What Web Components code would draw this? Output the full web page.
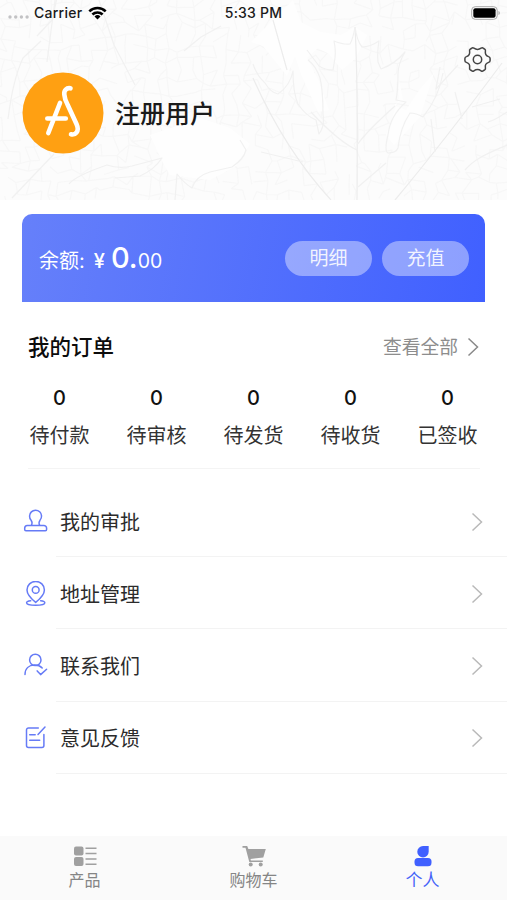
<!DOCTYPE html>
<html lang="zh-CN">
<head>
<meta charset="utf-8">
<title>个人</title>
<style>
    body {
        margin: 0;
        background: #fff;
        font-family: Inter, "Noto Sans CJK SC", sans-serif;
    }
</style>
</head>
<body>
<x-profile-page></x-profile-page>

<script>
function makeTemplate(html) {
    const template = document.createElement('template');
    template.innerHTML = html;
    return template;
}

class BaseElement extends HTMLElement {
    constructor() {
        super();
        this.attachShadow({mode: 'open'});
        this.shadowRoot.appendChild(this.constructor.template.content.cloneNode(true));
    }
}

const icons = {
    stamp: `<path d="M8.300 16.500c1.200-2.300.9-3.900-.2-5.300A6 6 0 1 1 17.100 11.100c-1.200 1.500-1.500 3.200-.3 5.400M4.300 16.500h16.600a2.700 2.700 0 0 1 2.700 2.700v1.300a1.200 1.200 0 0 1-1.200 1.200H2.900a1.200 1.200 0 0 1-1.200-1.200v-1.300a2.700 2.700 0 0 1 2.600-2.700z"/>`,
    pin: `<path d="M12.700 21.400C8 17.500 4 13.500 4 8.900a8.700 8.500 0 0 1 17.400 0c0 4.600-4 8.600-8.700 12.500z"/><circle cx="12.700" cy="8.900" r="3.400"/><path d="M7.700 19.700c-2.500.2-4.100.9-4.100 2 0 1.500 3.900 2.500 9.100 2.500s9.100-1 9.100-2.500c0-1.100-1.600-1.800-4.100-2"/>`,
    contact: `<circle cx="12.300" cy="6.900" r="5.700"/><path d="M2 21.500c.1-6 4.100-9.400 9.500-9.400 3.300 0 5.900.9 7.700 2.800M14.200 17.900l3.400 3.700 6-5.400"/>`,
    feedback: `<path d="M15.300 3H5.500a2 2 0 0 0-2 2v15.600a2 2 0 0 0 2 2h13.400a2 2 0 0 0 2-2V9.500M6.700 9.700h5.500M6.700 15.200h10M15 9.500l7-7.500"/>`
};

class StatusBar extends BaseElement {
    static template = makeTemplate(`
<style>
    :host {
        display: grid;
        grid-template-columns: 1fr auto 1fr;
        align-items: center;
        height: 26px;
        padding: 0 7px 0 8px;
        font-size: 14px;
        font-weight: 500;
        color: #1a1a1a;
    }
    .left { display: flex; align-items: center; }
    .text { margin-top: -2px; }
    .time { margin-right: 1px; letter-spacing: .2px; }
    .dots { margin-top: 8px; margin-right: 5px; }
    .carrier { letter-spacing: .25px; }
    .wifi { margin-left: 6px; }
    .battery { justify-self: end; }
    svg { display: block; }
</style>
<div class="left">
    <svg class="dots" width="21" height="4" fill="#c2c2c4">
        <circle cx="2" cy="2" r="1.700"/><circle cx="7.700" cy="2" r="1.700"/><circle cx="13.400" cy="2" r="1.700"/><circle cx="19.100" cy="2" r="1.700"/>
    </svg>
    <span class="text carrier">Carrier</span>
    <svg class="wifi" width="19" height="14" viewBox="0 0 19 14" fill="none" stroke="#000" stroke-width="2.500">
        <path d="M1.300 5.300a11.600 11.600 0 0 1 16.400 0M4.400 8.500a7.200 7.200 0 0 1 10.200 0"/>
        <path d="M9.500 13.500l-3-3a4.300 4.300 0 0 1 6 0z" fill="#000" stroke="none"/>
    </svg>
</div>
<span class="text time">5:33 PM</span>
<svg class="battery" width="29" height="14" viewBox="0 0 29 14">
    <rect x=".7" y=".7" width="25.500" height="12.600" rx="3.500" fill="#fff" stroke="#a8a8a8"/>
    <rect x="2.300" y="2.300" width="22.300" height="9.400" rx="2"/>
    <path d="M27.500 5v4c1.700-.6 1.700-3.400 0-4z" fill="#a8a8a8"/>
</svg>
`);
}

class LeafBackdrop extends BaseElement {
    static template = makeTemplate(`
<style>
    :host { display: block; }
    svg { display: block; }
</style>
<svg width="507" height="200" viewBox="0 0 507 200" fill="none">
    <rect width="507" height="200" fill="#fcfcfc"/>
    <g class="veins" stroke="#f7f7f7" stroke-width="1.200" stroke-linejoin="round"></g>
    <path fill="#fefefe" d="M293 0l8 22 20 10 20 3 14-8 12 8-11 23-14 12-13-16-11-6-11 10 12 24 10 28-11 2-17-38-6-18-8 20-24-30-12-4zM397 70l6 30-9 5 12 5 14-21 14-16-14 44-26 28-8-10 13-37zM150 135l50-17 30 10 20 16-14 22-26 14-40-5-8-14z"/>
    <g stroke="#f1f1f1" stroke-width="1.200" stroke-linejoin="round">
        <path stroke="#ececec" d="M355 27q3 50 2 173M253 78Q285 150 331 200M395 200q50-60 107-137M273 20l14 50"/>
        <path d="M355 27q-2 12-5 17-6 1-16-3 2 10 1 17l-2 12q-8 0-14-4l-12-16M355 27q2 14 7 20 8 0 17-6-2 12-1 21l3 7q14-5 24-17-7 12-7 22 0 16-2 26l10 2q-16 14-18 33-4 16 0 18 8 0 10-5 2-20 12-35 6 0 13 4 16-20 20-44"/>
        <path d="M253 64q4 12 12 19 6 10 13 11 12-8 15-23 0 22 5 33 8 12 18 16l3 14q6-8 4-20 0-24-3-36-4-12-12-18M440 67l-4 22 22-24M488 122c10-3 15-8 19-10M507 145c-18 8-32 13-42 25"/>
        <path d="M99 0l15 45 21 40M37 36l15-16 5-22M55 0l-8 62M8 119q5-40 15-61l18-17M12 198l42-44M69 184q6-8 38-19 12 4 25 1l30-8q-8 12-22 18l-25 2M175 200l2-26q8 10 15 14 4-12 18-16l22-5q12-8 14-17l-6-10M184 51l17-14 20-11"/>
        <path d="M357 150q-18-8-46-38M357 145q10-14 38-39M358 187l28-24M303 162l-42-10M435 152l-4-33M462 119l-7-27M472 107l28-8"/>
    </g>
</svg>
`);

    connectedCallback() {
        this.seed = 7;
        this.drawVeins();
    }

    random() {
        this.seed = (this.seed * 16807) % 2147483647;
        return this.seed / 2147483647;
    }

    // Jittered mesh of short strokes, like the small veins of a leaf
    drawVeins() {
        const step = 11;
        const points = [];
        for (let row = 0; row < 20; row++) {
            points.push([]);
            for (let col = 0; col < 49; col++) {
                points[row].push([
                    ((col - 1 + this.random() * 0.9) * step).toFixed(1),
                    ((row - 1 + this.random() * 0.9) * step).toFixed(1)
                ]);
            }
        }
        let d = '';
        for (let row = 0; row < 19; row++) {
            for (let col = 0; col < 48; col++) {
                const start = points[row][col];
                if (this.random() < 0.65) {
                    d += `M${start}L${points[row][col + 1]}`;
                }
                if (this.random() < 0.65) {
                    d += `M${start}L${points[row + 1][col]}`;
                }
            }
        }
        this.shadowRoot.querySelector('.veins').innerHTML = `<path d="${d}"/>`;
    }
}

class UserHeader extends BaseElement {
    static template = makeTemplate(`
<style>
    :host {
        display: grid;
        height: 200px;
    }
    x-leaf-backdrop, .content { grid-area: 1 / 1; }
    .content { z-index: 1; }
    .user {
        display: flex;
        align-items: center;
        padding: 20px 16px 0 22px;
    }
    .avatar { margin-top: 26px; }
    .name {
        flex: 1;
        margin: 27px 0 0 11px;
        font-size: 25px;
        line-height: 36px;
        font-weight: 500;
        color: #1b1b1b;
    }
    .settings {
        align-self: flex-start;
        width: 27px;
        height: 27px;
    }
    svg { display: block; }
</style>
<x-leaf-backdrop></x-leaf-backdrop>
<div class="content">
    <x-status-bar></x-status-bar>
    <div class="user">
        <svg class="avatar" width="82" height="82" viewBox="0 0 82 82" fill="none" stroke="#fff" stroke-width="4.600" stroke-linecap="round" stroke-linejoin="round">
            <circle cx="41" cy="41" r="40.500" fill="#ffa012" stroke="none"/>
            <path d="M38 31L26.300 61M25.300 46.500h18.500"/>
            <path d="M48.500 16.300C44.500 15.500 41.800 18.500 42.300 22.500Q42.600 27 45.500 32.500L54.500 52Q57 57.500 54.500 60.500Q52.300 63.200 49 62.300"/>
        </svg>
        <div class="name"><slot></slot></div>
        <svg class="settings" viewBox="0 0 27 27" fill="none" stroke="#444" stroke-width="1.500" stroke-linejoin="round">
            <circle cx="13.500" cy="13.500" r="4.200"/>
            <path d="M7.400 2.500Q8.600 1.300 9.900 2.200Q13.500 4.700 17.100 2.200Q18.400 1.300 19.600 2.500L20.700 3.200Q21.800 4 21.400 5.400Q20.700 9.400 24.600 10.600Q26.100 11 26.100 12.600V14.400Q26.100 16 24.600 16.400Q20.700 17.600 21.400 21.600Q21.800 23 20.700 23.800L19.600 24.500Q18.400 25.700 17.100 24.800Q13.500 22.300 9.900 24.800Q8.600 25.700 7.400 24.500L6.300 23.800Q5.200 23 5.600 21.600Q6.300 17.600 2.400 16.400Q.9 16 .9 14.400V12.600Q.9 11 2.400 10.600Q6.300 9.400 5.600 5.400Q5.200 4 6.300 3.200Z"/>
        </svg>
    </div>
</div>
`);
}

class PillButton extends BaseElement {
    static template = makeTemplate(`
<style>
    :host { display: block; }
    button {
        display: block;
        width: 87px;
        height: 35px;
        padding: 1px 0 0;
        border: 0;
        border-radius: 18px;
        background: rgba(255, 255, 255, .4);
        color: rgba(255, 255, 255, .9);
        font: inherit;
        font-size: 19px;
        line-height: 34px;
    }
</style>
<button><slot></slot></button>
`);
}

class BalanceCard extends BaseElement {
    static template = makeTemplate(`
<style>
    :host {
        display: flex;
        align-items: center;
        box-sizing: border-box;
        height: 88px;
        margin: 14px 22px 0;
        padding: 0 16px 0 17px;
        border-radius: 10px 10px 0 0;
        background: linear-gradient(100deg, #6680fa, #4060ff);
        color: #fff;
    }
    .balance {
        display: flex;
        align-items: baseline;
        flex: 1;
        padding-top: 2px;
        font-size: 20px;
        line-height: 40px;
    }
    .currency { margin: 0 6px 0 9px; font-size: 20px; font-weight: 500; }
    .whole { font-size: 29px; font-weight: 500; }
    .cents { font-size: 19.500px; }
    .actions { display: flex; gap: 10px; }
</style>
<div class="balance">
    <span>余额:</span>
    <span class="currency">¥</span>
    <span class="whole">0.</span>
    <span class="cents">00</span>
</div>
<div class="actions">
    <x-pill-button>明细</x-pill-button>
    <x-pill-button>充值</x-pill-button>
</div>
`);
}

class ChevronIcon extends BaseElement {
    static template = makeTemplate(`
<style>
    :host { display: block; color: #b9b9b9; }
    svg { display: block; }
</style>
<svg width="12" height="20" viewBox="0 0 12 20" fill="none" stroke="currentColor" stroke-width="1.500">
    <path d="M1.500 1.500l9 8.500-9 8.500"/>
</svg>
`);
}

class OrderCount extends BaseElement {
    static template = makeTemplate(`
<style>
    :host {
        display: flex;
        flex-direction: column;
        align-items: center;
        font-size: 20px;
        color: #333;
    }
    .count {
        height: 26px;
        line-height: 26px;
        font-weight: 450;
        color: #111;
    }
    .label { margin-top: 10px; line-height: 30px; }
</style>
<span class="count"></span>
<span class="label"><slot></slot></span>
`);

    connectedCallback() {
        this.shadowRoot.querySelector('.count').textContent = this.getAttribute('count');
    }
}

class OrderPanel extends BaseElement {
    static template = makeTemplate(`
<style>
    :host { display: block; height: 183px; }
    header {
        display: flex;
        align-items: center;
        height: 36px;
        padding: 27px 28px 0 28px;
    }
    h2 {
        flex: 1;
        margin: 0;
        font-size: 21.500px;
        line-height: 36px;
        font-weight: 500;
        color: #0c0c0c;
    }
    .all { margin: -4px 9px 0 0; font-size: 18.800px; color: #8d8d8d; }
    x-chevron-icon { color: #898989; }
    .counts {
        display: grid;
        grid-template-columns: repeat(5, 97px);
        justify-content: center;
        margin-top: 20px;
    }
    .line { height: 1px; margin: 17px 27px 0 28px; background: #f4f4f4; }
</style>
<header>
    <h2>我的订单</h2>
    <span class="all">查看全部</span>
    <x-chevron-icon></x-chevron-icon>
</header>
<div class="counts">
    <x-order-count count="0">待付款</x-order-count>
    <x-order-count count="0">待审核</x-order-count>
    <x-order-count count="0">待发货</x-order-count>
    <x-order-count count="0">待收货</x-order-count>
    <x-order-count count="0">已签收</x-order-count>
</div>
<div class="line"></div>
`);
}

class MenuRow extends BaseElement {
    static template = makeTemplate(`
<style>
    :host {
        display: flex;
        height: 72.200px;
        padding-left: 23px;
    }
    .icon {
        align-self: center;
        width: 25px;
        height: 25px;
        margin-right: 8px;
        fill: none;
        stroke: #667bf6;
        stroke-width: 1.500;
        stroke-linecap: round;
        stroke-linejoin: round;
    }
    .body {
        display: flex;
        align-items: center;
        flex: 1;
        padding: 2px 24px 0 4px;
        border-bottom: 1px solid #f3f3f3;
        font-size: 20px;
        line-height: 30px;
        color: #2b2b2b;
    }
    .label { flex: 1; padding-top: 2px; }
</style>
<svg class="icon" viewBox="0 0 25 25"></svg>
<div class="body">
    <span class="label"><slot></slot></span>
    <x-chevron-icon></x-chevron-icon>
</div>
`);

    connectedCallback() {
        this.shadowRoot.querySelector('.icon').innerHTML = icons[this.getAttribute('icon')];
    }
}

class TabItem extends BaseElement {
    static template = makeTemplate(`
<style>
    :host {
        display: flex;
        flex-direction: column;
        align-items: center;
        padding-top: 9px;
        font-size: 16px;
        color: #858585;
        --icon: #a0a0a0;
    }
    :host([active]) {
        font-size: 17px;
        color: #4564f8;
        --icon: #4060ff;
    }
    .label { margin-top: 1px; line-height: 24px; }
</style>
<slot name="icon"></slot>
<span class="label"><slot></slot></span>
`);
}

class TabBar extends BaseElement {
    static template = makeTemplate(`
<style>
    :host {
        display: grid;
        grid-template-columns: repeat(3, 1fr);
        height: 64px;
        background: #fafafa;
    }
    svg { display: block; fill: var(--icon); }
</style>
<x-tab-item>
    <svg slot="icon" width="24" height="22" viewBox="0 0 24 22">
        <rect x="1" y="1.500" width="9.500" height="9" rx="2"/><rect x="1" y="12" width="9.500" height="9" rx="2"/>
        <path d="M12.500 2.500h11V4h-11zM12.500 7.800h11v1.500h-11zM12.500 13.200h11v1.500h-11zM12.500 18.500h11V20h-11z"/>
    </svg>
    产品
</x-tab-item>
<x-tab-item>
    <svg slot="icon" width="24" height="22" viewBox="0 0 24 22">
        <path d="M.5 1h4.700l1.200 3h17.400L21.300 12.600 8.500 13.900l.4 1.500h11.900v1.600H7.300L3.500 2.700H.5z"/>
        <circle cx="8.700" cy="19.600" r="2"/><circle cx="18.700" cy="19.600" r="2"/>
    </svg>
    购物车
</x-tab-item>
<x-tab-item active>
    <svg slot="icon" width="22" height="22" viewBox="0 0 22 22">
        <path d="M11 1h5.700v5.700A5.700 5.700 0 1 1 11 1z"/>
        <rect x="2.500" y="13" width="17" height="8.200" rx="3.500"/>
    </svg>
    个人
</x-tab-item>
`);
}

class ProfilePage extends BaseElement {
    static template = makeTemplate(`
<style>
    :host {
        display: flex;
        flex-direction: column;
        height: 900px;
        overflow: hidden;
    }
    main { flex: 1; }
</style>
<x-user-header>注册用户</x-user-header>
<main>
    <x-balance-card></x-balance-card>
    <x-order-panel></x-order-panel>
    <x-menu-row icon="stamp">我的审批</x-menu-row>
    <x-menu-row icon="pin">地址管理</x-menu-row>
    <x-menu-row icon="contact">联系我们</x-menu-row>
    <x-menu-row icon="feedback">意见反馈</x-menu-row>
</main>
<x-tab-bar></x-tab-bar>
`);
}

window.customElements.define('x-status-bar', StatusBar);
window.customElements.define('x-leaf-backdrop', LeafBackdrop);
window.customElements.define('x-user-header', UserHeader);
window.customElements.define('x-pill-button', PillButton);
window.customElements.define('x-balance-card', BalanceCard);
window.customElements.define('x-chevron-icon', ChevronIcon);
window.customElements.define('x-order-count', OrderCount);
window.customElements.define('x-order-panel', OrderPanel);
window.customElements.define('x-menu-row', MenuRow);
window.customElements.define('x-tab-item', TabItem);
window.customElements.define('x-tab-bar', TabBar);
window.customElements.define('x-profile-page', ProfilePage);
</script>
</body>
</html>
